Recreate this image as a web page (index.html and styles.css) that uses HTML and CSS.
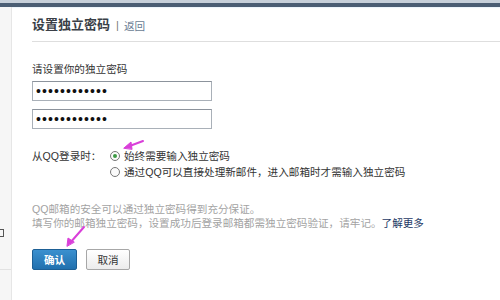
FILE: index.html
```html
<!DOCTYPE html>
<html lang="zh-CN">
<head>
<meta charset="utf-8">
<title>设置独立密码</title>
<link rel="stylesheet" href="styles.css">
</head>
<body>
<div class="topbar"></div>
<div class="layout">
  <aside class="side">
    <span class="side-glyph"></span>
    <span class="side-line"></span>
  </aside>
  <main class="main">
    <header class="head">
      <h1 class="title">设置独立密码</h1>
      <span class="sep">|</span>
      <a class="back">返回</a>
    </header>
    <section class="form">
      <p class="label">请设置你的独立密码</p>
      <input class="pwd" type="password" value="123456789012">
      <input class="pwd" type="password" value="123456789012">
      <div class="login-opt">
        <span class="opt-label">从QQ登录时：</span>
        <div class="opt-list">
          <label class="opt"><span class="radio checked"></span>始终需要输入独立密码</label>
          <label class="opt"><span class="radio"></span>通过QQ可以直接处理新邮件，进入邮箱时才需输入独立密码</label>
        </div>
      </div>
      <p class="tip">QQ邮箱的安全可以通过独立密码得到充分保证。<br>填写你的邮箱独立密码，设置成功后登录邮箱都需独立密码验证，请牢记。<a class="more">了解更多</a></p>
      <div class="actions">
        <button class="btn primary">确认</button>
        <button class="btn">取消</button>
      </div>
    </section>
  </main>
</div>
<svg class="marks" width="500" height="300" viewBox="0 0 500 300">
  <g stroke="#d93fd9" stroke-width="2" fill="#d93fd9" stroke-linecap="round">
    <line x1="143" y1="141" x2="127" y2="147"/>
    <polygon points="124,148 131,142 132,149" stroke-width="1"/>
    <line x1="84" y1="227" x2="70" y2="243"/>
    <polygon points="67,246 68,238 74,242" stroke-width="1"/>
  </g>
</svg>
</body>
</html>
```
FILE: styles.css
```css
html, body {
  margin: 0;
  padding: 0;
  background: #fff;
}
body {
  width: 500px;
  height: 300px;
  overflow: hidden;
  font-family: "Liberation Sans", "Noto Sans CJK SC", sans-serif;
  font-size: 10.6px;
  color: #333;
}
.topbar {
  height: 4px;
  border-top: 3px solid #c7d0da;
  background: #4b5e74;
  box-shadow: 0 1px 1px #eef5fb;
}
.layout {
  display: flex;
  height: 293px;
}
.side {
  width: 11px;
  flex: none;
  background: #f6f6f6;
  border-right: 1px solid #e6e6e6;
  overflow: hidden;
  display: flex;
  flex-direction: column;
}
.side-glyph {
  box-sizing: border-box;
  margin-top: 222px;
  width: 4px;
  height: 8px;
  border: 1px solid #555;
  border-left: none;
}
.side-line {
  margin-top: 32px;
  height: 1px;
  background: #e2e2e2;
}
.main {
  flex: 1;
  padding-top: 10px;
  padding-left: 20px;
}
.head {
  display: flex;
  align-items: center;
  height: 16px;
  padding-bottom: 8px;
  border-bottom: 1px solid #dedede;
}
.title {
  margin: 0;
  font-size: 13px;
  line-height: 16px;
  font-weight: bold;
  color: #3a3f47;
}
.sep {
  margin: 0 5px 0 6px;
  color: #777;
  font-size: 11px;
}
.back {
  color: #6a7c93;
  font-size: 10.6px;
}
.form {
  display: flex;
  flex-direction: column;
  align-items: flex-start;
}
.label {
  margin: 20px 0 5px;
  line-height: 14px;
}
.pwd {
  box-sizing: border-box;
  width: 180px;
  height: 20px;
  margin: 0 0 8px;
  padding: 0 3px;
  border: 1px solid #a9b0b8;
  border-top-color: #8c939c;
  font-family: "Liberation Sans", sans-serif;
  font-size: 14px;
  letter-spacing: 1.1px;
  color: #111;
  outline: none;
}
.login-opt {
  display: flex;
  margin-top: 11px;
  line-height: 16px;
}
.opt-label {
  width: 78px;
}
.opt-list {
  display: flex;
  flex-direction: column;
}
.opt {
  display: flex;
  align-items: center;
  gap: 4px;
}
.radio {
  box-sizing: border-box;
  width: 10px;
  height: 10px;
  border: 1px solid #777;
  border-radius: 50%;
  background: #fafafa;
  display: flex;
  align-items: center;
  justify-content: center;
}
.radio.checked::after {
  content: "";
  width: 4px;
  height: 4px;
  border-radius: 50%;
  background: #3d9a44;
}
.tip {
  margin: 22px 0 0;
  line-height: 14px;
  color: #a3a3a3;
}
.more {
  color: #1e3a66;
}
.actions {
  display: flex;
  gap: 9px;
  margin-top: 19px;
}
.btn {
  box-sizing: border-box;
  width: 44px;
  height: 21px;
  padding: 0;
  border: 1px solid #a7a7a7;
  border-radius: 2px;
  background: linear-gradient(#ffffff, #ececec);
  font-family: "Liberation Sans", "Noto Sans CJK SC", sans-serif;
  font-size: 10.6px;
  color: #333;
}
.btn.primary {
  width: 45px;
  border-color: #1d5f95;
  background: linear-gradient(#3b90cf, #2170ae);
  color: #fff;
  font-weight: bold;
}
.marks {
  position: absolute;
  top: 0;
  left: 0;
  pointer-events: none;
}
```
